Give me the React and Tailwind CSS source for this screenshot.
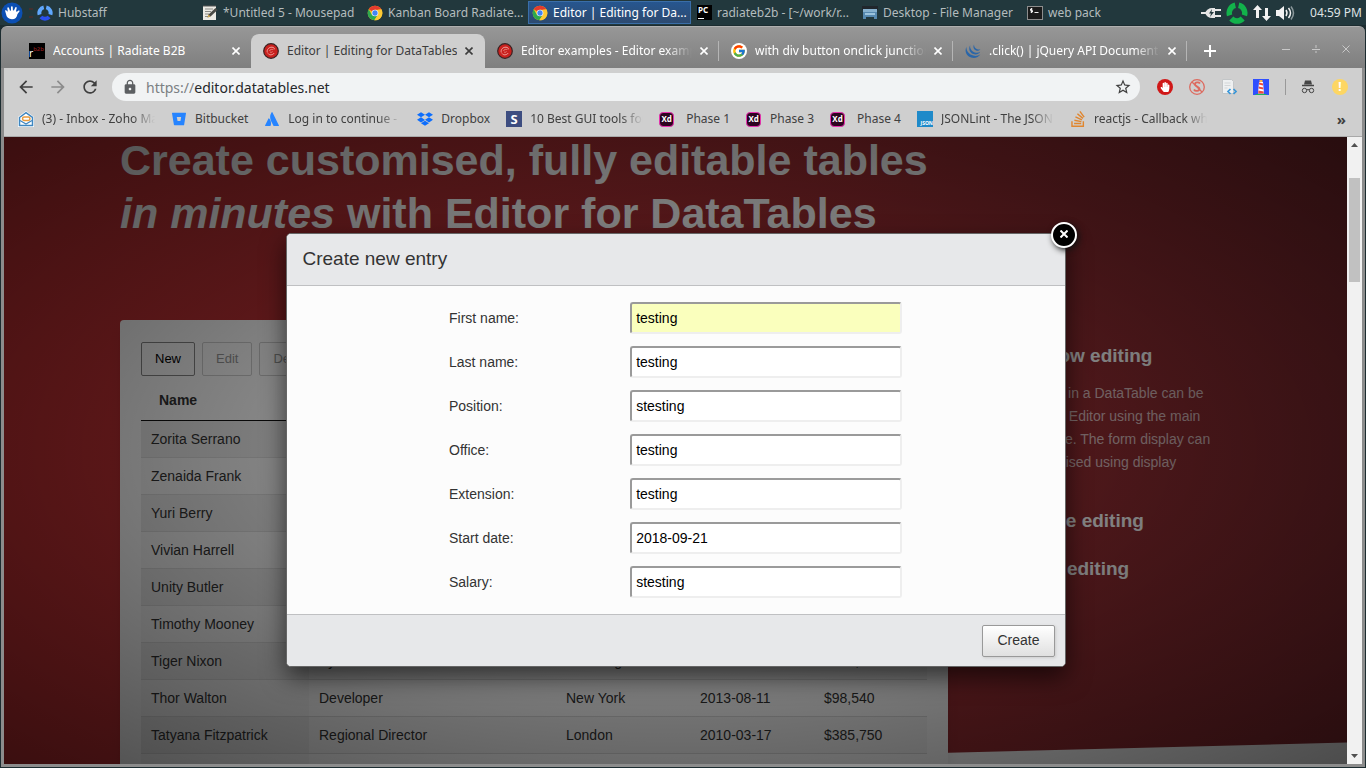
import React from 'react';
import { MdArrowBack, MdArrowForward, MdRefresh, MdLock, MdStarBorder } from 'react-icons/md';
import { FaDropbox, FaHandPaper } from 'react-icons/fa';
import { FcGoogle } from 'react-icons/fc';
import { SiAtlassian, SiBitbucket, SiStackoverflow } from 'react-icons/si';

/* ---------- Icons ---------- */

const ChromeIcon = () => (
  <svg viewBox="0 0 48 48" className="size-4 shrink-0">
    <circle cx="24" cy="24" r="22" fill="#fbc116" />
    <path d="M24 24 4.9 13A22 22 0 0 1 43.1 13L43 14H24z" fill="#e33b2e" />
    <path d="M4.9 13A22 22 0 0 0 22 45.900l11-17L24 24 14.500 29z" fill="#2da94f" />
    <path d="M43.100 13A22 22 0 0 1 22 45.900L33.500 28 33 14z" fill="#fcc934" />
    <circle cx="24" cy="24" r="10" fill="#fff" />
    <circle cx="24" cy="24" r="8" fill="#4285f4" />
  </svg>
);

const XfceIcon = () => (
  <svg viewBox="0 0 22 22" className="size-[22px] shrink-0">
    <circle cx="11" cy="11" r="10.500" fill="#0b4fb3" />
    <path
      d="M4 8.500c.8-.6 1.500-.3 2 .4l.8.8L6.300 6c.3-.9 1.400-.8 1.700 0l1 2.800 1-.3V4.800c.3-.9 1.500-.9 1.700 0l.2 3.400 1 .2 1.400-3c.6-.8 1.500-.3 1.400.5L15 9.300l.9.5 1.600-1.300c.8-.4 1.400.4.9 1.100l-2 2.600c-.3 3-2.300 5-5.400 5-3.400 0-5.500-2-6-5.200z"
      fill="#fff"
    />
  </svg>
);

// three thick arcs, blue for the timer app and green in the tray
const RingIcon = ({ bottom, sides, className }) => (
  <svg viewBox="0 0 22 22" className={className} fill="none" strokeWidth="5.500">
    <path d="M3.600 13.300A7.800 7.800 0 0 1 9.300 3.300" stroke={sides} />
    <path d="M12.700 3.300a7.800 7.800 0 0 1 5.700 10" stroke={sides} />
    <path d="M5.300 16.500a7.800 7.800 0 0 0 11.400 0" stroke={bottom} />
  </svg>
);

const NotepadIcon = () => (
  <svg viewBox="0 0 16 16" className="size-4 shrink-0">
    <path d="M1 1h13v14H1z" fill="#eceae4" />
    <path d="M3 4h8M3 6.500h6M3 9h4M3 11.500h5" stroke="#8a8a86" />
    <path d="m5.500 12.500 1-3L13.500 3l2 2-7 6.500z" fill="#4a4a45" />
    <path d="m5.500 12.500 1-3 2 2z" fill="#d7ae52" />
    <path d="M1 1h13" stroke="#555" />
  </svg>
);

const PyCharmIcon = () => (
  <span className="flex size-[15px] shrink-0 flex-col items-start justify-between bg-black p-px">
    <span className="text-[8px] leading-[8px] font-bold text-white">PC</span>
    <span className="h-px w-1.5 bg-white" />
  </span>
);

const FilesIcon = () => (
  <svg viewBox="0 0 16 16" className="size-4 shrink-0">
    <path d="M0 1h16v4H0z" fill="#20262c" />
    <path d="M1 4h14v3H1z" fill="#86b1cf" />
    <path d="M1 7h14v7h-3v-2H4v2H1z" fill="#5689b0" />
    <path d="M3 8h10v2H3z" fill="#9bc3dd" />
  </svg>
);

const TerminalIcon = () => (
  <svg viewBox="0 0 16 16" className="size-4 shrink-0">
    <rect x=".5" y="1.500" width="15" height="13" fill="#1b1b1b" stroke="#8d8d8d" />
    <path d="M5.500 4H3.500v1.500h2V7h-2M4.500 3v5M7.500 7.500h4" stroke="#eee" fill="none" />
  </svg>
);

const PlugIcon = () => (
  <svg viewBox="0 0 20 14" className="h-3.5 w-5 shrink-0" fill="#e6e6e6">
    <path d="M0 6h5v2H0z" />
    <path d="M4 7c1-3 4-5 7-5h3v10h-3c-3 0-6-2-7-5z" />
    <path d="M14 3h6v2h-6zM14 9h6v2h-6z" />
    <path d="m11 3-3 4.500h2L9 11l4-5h-2.500z" fill="#22383d" />
  </svg>
);

const TransferIcon = () => (
  <svg viewBox="0 0 18 16" className="h-4 w-[18px] shrink-0" fill="#f2f2f2">
    <path d="M4.500 0 9 5H6v8H3V5H0z" />
    <path d="M13.500 16 9 11h3V3h3v8h3z" />
  </svg>
);

const VolumeIcon = () => (
  <svg viewBox="0 0 19 16" className="h-4 w-[19px] shrink-0" fill="none" strokeWidth="1.500">
    <path d="M0 5h3l5-4v14l-5-4H0z" fill="#f2f2f2" />
    <path d="M10 5q2 3 0 6M12.500 3q4 5 0 10" stroke="#f2f2f2" />
    <path d="M15 1.500q5 6.500 0 13" stroke="#8b989b" />
  </svg>
);

const RadiateIcon = () => (
  <span className="flex size-4 shrink-0 items-end bg-black text-[10px] leading-[12px] text-white">
    r<span className="self-start text-[6px] leading-[12px] text-[#a02020]">b2b</span>
  </span>
);

const DataTablesIcon = () => (
  <svg viewBox="0 0 16 16" className="size-4 shrink-0" fill="none">
    <circle cx="8" cy="8" r="7.300" fill="#c9211e" stroke="#3a2222" strokeWidth="1.200" />
    <path d="M4.300 9.500C3.500 6.500 6 4 9 4.200c2 .1 2.800 1.300 2 2.300M5 10.500c1.500 2 4.500 1.700 6.300-.5" stroke="#f0a39d" />
    <path d="M6.500 8c.5-1.500 2-2 3.300-1.500M7 9c1 .6 2 .3 2.600-.5" stroke="#e8827c" />
  </svg>
);

const GoogleIcon = () => (
  <span className="flex size-4 shrink-0 items-center justify-center rounded-full bg-white">
    <FcGoogle className="size-3.5" />
  </span>
);

const JQueryIcon = () => (
  <svg viewBox="0 0 16 16" className="size-4 shrink-0" fill="#2a66a9">
    <path d="M1.600 3.500C-1 8 1.500 13.800 7 14.800c3.500.6 7-.8 8.300-3.500-2 1.500-4.500 2-7 1.300C3.800 11.500.8 7.500 1.600 3.500z" />
    <path d="M5.200 2.200C3.200 5.500 4.500 9.700 8.300 11c2.700.9 5.500.2 6.900-2.200-1.700 1-3.600 1.200-5.400.6C6.500 8.300 4.600 5.300 5.200 2.200z" />
    <path d="M9 1.500c-1.300 2.300-.5 5 2 6 1.700.6 3.400.2 4.400-1.200-1 .4-2.100.4-3.100 0C10.200 5.500 8.900 3.700 9 1.500z" />
  </svg>
);

const CrossIcon = ({ className }) => (
  <svg viewBox="0 0 8 8" className={className} stroke="currentColor" strokeWidth="1.600">
    <path d="M.5.5l7 7M7.500.5l-7 7" />
  </svg>
);

const ZohoIcon = () => (
  <svg viewBox="0 0 16 16" className="size-4 shrink-0" fill="none">
    <path d="M0 6 8 0l8 6v10H0z" fill="#fff" />
    <path d="M1.500 6.500 8 1.700l6.500 4.800v8h-13z" stroke="#3f86c0" strokeWidth="1.500" />
    <rect x="4.500" y="6" width="7.500" height="3.500" rx="1.700" stroke="#e99a3c" strokeWidth="1.500" />
    <path d="m2 9.500 6 3.500 6-3.500" stroke="#3f86c0" strokeWidth="1.300" />
  </svg>
);

const XdIcon = () => (
  <span className="flex size-4 shrink-0 items-center">
    <span className="flex size-[15px] items-center justify-center rounded-sm border border-[#e62fae] bg-[#2d0420] text-[8px] leading-none font-bold text-white">
      Xd
    </span>
  </span>
);

const SIcon = () => (
  <span className="flex size-4 shrink-0 items-center justify-center bg-[#3d4d80] text-[13px] leading-none font-bold text-white">
    S
  </span>
);

const JsonIcon = () => (
  <span className="flex size-4 shrink-0 items-end justify-end bg-[#1f8ac9] text-[5px] leading-[7px] font-bold text-white">
    JSON
  </span>
);

const StopScriptIcon = () => (
  <svg viewBox="0 0 16 16" className="size-4" fill="none" stroke="#dd6a5f">
    <circle cx="8" cy="8" r="7.300" strokeWidth="1.300" />
    <path d="m3 3 10 10" strokeWidth="1.300" />
    <path d="M11 4.500c-1-1.500-5-1.500-5 .7 0 2.500 4.500 2 4.500 4.600 0 2.500-4.500 2.700-5.500.7" strokeWidth="1.800" />
  </svg>
);

const PageCodeIcon = () => (
  <svg viewBox="0 0 16 16" className="size-4" fill="none">
    <path d="M1.500.5h9l2 2v12h-11z" fill="#eef0f1" stroke="#c3c6c8" />
    <path d="M3.500 4h6M3.500 6.500h6M3.500 9h3" stroke="#d3d6d8" />
    <path d="m9.500 10-2.500 2.500L9.500 15M12.500 10l2.500 2.500-2.500 2.500" stroke="#3a97d8" strokeWidth="1.700" />
  </svg>
);

const LighthouseIcon = () => (
  <svg viewBox="0 0 16 16" className="size-4">
    <path d="M0 0h16v16H0z" fill="#304ffe" />
    <path d="M2 16c1-2 11-2 12 0z" fill="#1fb55a" />
    <path d="M6 3h4l1 11.500H5z" fill="#fff" />
    <path d="m6 3.500 4 1v2l-4-1zM5.700 7.500l4.600 1v2l-4.600-1zM5.400 11.500l5.300 1v2H5.200z" fill="#ef4b3c" />
    <path d="M6.500 1h3v2h-3z" fill="#ffb74a" />
  </svg>
);

const IncognitoIcon = () => (
  <svg viewBox="0 0 16 16" className="size-4" fill="none" stroke="#454545">
    <path d="M5 1.500h6l1 4H4z" fill="#454545" stroke="none" />
    <path d="M2 6.500h12" strokeWidth="1.500" />
    <circle cx="4.500" cy="11.500" r="2.200" />
    <circle cx="11.500" cy="11.500" r="2.200" />
    <path d="M6.500 11q1.500-1 3 0" />
  </svg>
);

/* ---------- Data ---------- */

const tasks = [
  { label: 'Hubstaff', icon: <RingIcon bottom="#2a4ff0" sides="#5fa8ff" className="size-4 shrink-0" /> },
  { label: '*Untitled 5 - Mousepad', icon: <NotepadIcon /> },
  { label: 'Kanban Board Radiate...', icon: <ChromeIcon /> },
  { label: 'Editor | Editing for Da...', icon: <ChromeIcon />, active: true },
  { label: 'radiateb2b - [~/work/r...', icon: <PyCharmIcon /> },
  { label: 'Desktop - File Manager', icon: <FilesIcon /> },
  { label: 'web pack', icon: <TerminalIcon /> },
];

const tabs = [
  { label: 'Accounts | Radiate B2B', icon: <RadiateIcon /> },
  { label: 'Editor | Editing for DataTables', icon: <DataTablesIcon />, active: true },
  { label: 'Editor examples - Editor examples', icon: <DataTablesIcon />, fade: true, divider: true },
  { label: 'with div button onclick junction on', icon: <GoogleIcon />, fade: true, divider: true },
  { label: '.click() | jQuery API Documentation', icon: <JQueryIcon />, fade: true, divider: true },
];

const bookmarks = [
  { label: '(3) - Inbox - Zoho Mail', icon: <ZohoIcon />, fade: true },
  { label: 'Bitbucket', icon: <SiBitbucket className="mx-px size-3.5 shrink-0 text-[#2684ff]" /> },
  { label: 'Log in to continue - Log in', icon: <SiAtlassian className="mx-px size-3.5 shrink-0 text-[#2684ff]" />, fade: true },
  { label: 'Dropbox', icon: <FaDropbox className="size-4 shrink-0 text-[#0d6efd]" /> },
  { label: '10 Best GUI tools for Mongo', icon: <SIcon />, fade: true },
  { label: 'Phase 1', icon: <XdIcon />, indent: true },
  { label: 'Phase 3', icon: <XdIcon /> },
  { label: 'Phase 4', icon: <XdIcon />, indent: true },
  { label: 'JSONLint - The JSON Validator', icon: <JsonIcon />, fade: true },
  { label: 'reactjs - Callback when', icon: <SiStackoverflow className="size-4 shrink-0 text-[#e0862f]" />, fade: true },
];

const rows = [
  ['Zorita Serrano', 'Software Engineer', 'San Francisco', '2012-06-01', '$115,000'],
  ['Zenaida Frank', 'Software Engineer', 'New York', '2010-01-04', '$125,250'],
  ['Yuri Berry', 'Chief Marketing Officer', 'New York', '2009-06-25', '$675,000'],
  ['Vivian Harrell', 'Financial Controller', 'San Francisco', '2009-02-14', '$452,500'],
  ['Unity Butler', 'Marketing Designer', 'San Francisco', '2009-12-09', '$85,675'],
  ['Timothy Mooney', 'Office Manager', 'London', '2008-12-11', '$136,200'],
  ['Tiger Nixon', 'System Architect', 'Edinburgh', '2011-04-25', '$320,800'],
  ['Thor Walton', 'Developer', 'New York', '2013-08-11', '$98,540'],
  ['Tatyana Fitzpatrick', 'Regional Director', 'London', '2010-03-17', '$385,750'],
  ['Suki Burks', 'Developer', 'London', '2009-10-22', '$114,500'],
];

const fields = [
  { id: 'first-name', label: 'First name:', value: 'testing', filled: true },
  { id: 'last-name', label: 'Last name:', value: 'testing' },
  { id: 'position', label: 'Position:', value: 'stesting' },
  { id: 'office', label: 'Office:', value: 'testing' },
  { id: 'extension', label: 'Extension:', value: 'testing' },
  { id: 'start-date', label: 'Start date:', value: '2018-09-21' },
  { id: 'salary', label: 'Salary:', value: 'stesting' },
];

/* ---------- Desktop panel ---------- */

const Taskbar = () => (
  <header className="flex h-[25px] shrink-0 items-center overflow-hidden bg-[#22383d] pr-1 text-[12px] text-[#b4bcbe]">
    <div className="flex w-[33px] shrink-0 items-center gap-1.5 pl-px">
      <XfceIcon />
      <span className="h-2.5 w-1 border-y-2 border-[#43302f]" />
    </div>
    <nav className="flex min-w-0 flex-1 gap-0.5">
      {tasks.map((task) => (
        <button
          key={task.label}
          type="button"
          className={
            task.active
              ? 'flex h-[23px] w-[163px] items-center gap-[5px] border border-[#3a6ea8] bg-linear-to-b from-[#26568f] to-[#2d4a70] pl-[3px] whitespace-nowrap text-white'
              : 'flex h-[23px] w-[163px] items-center gap-[5px] pl-1 whitespace-nowrap'
          }
        >
          {task.icon}
          {task.label}
        </button>
      ))}
    </nav>
    <div className="flex shrink-0 items-center gap-[5px] text-[#dfe3e4]">
      <PlugIcon />
      <RingIcon bottom="#12b24b" sides="#12b24b" className="size-[22px]" />
      <TransferIcon />
      <VolumeIcon />
      <span className="pl-2.5">04:59 PM</span>
    </div>
  </header>
);

/* ---------- Browser chrome ---------- */

const TabStrip = () => (
  <div className="flex h-[42px] shrink-0 items-end rounded-t-md border-t border-[#b0b0b0] bg-linear-to-b from-[#979797] to-[#7f7f7f] pl-4 text-[12px] text-white">
    {tabs.map((tab) => (
      <div
        key={tab.label}
        className={
          tab.active
            ? 'flex h-[34px] w-[234px] items-center rounded-t-lg bg-[#cfcfcf] px-3 text-[#3c3c3c]'
            : 'flex h-[34px] w-[234px] items-center pl-3'
        }
      >
        {tab.icon}
        <a
          href="#tab"
          className={
            tab.fade
              ? 'ml-2 min-w-0 flex-1 overflow-hidden whitespace-nowrap [mask-image:linear-gradient(to_right,black_85%,transparent)]'
              : 'ml-2 min-w-0 flex-1 overflow-hidden whitespace-nowrap'
          }
        >
          {tab.label}
        </a>
        <button type="button" aria-label="Close tab" className={tab.active ? 'ml-2' : tab.divider ? 'mr-2.5 ml-2' : 'mr-[11px] ml-2'}>
          <CrossIcon className="size-2" />
        </button>
        {tab.divider && <span className="h-5 w-px bg-[#b5b5b5]" />}
      </div>
    ))}
    <button type="button" aria-label="New tab" className="mb-[11px] ml-[17px]">
      <svg viewBox="0 0 12 12" className="size-3" stroke="currentColor" strokeWidth="2">
        <path d="M6 0v12M0 6h12" />
      </svg>
    </button>
    <div className="mr-[15px] mb-[15px] ml-auto flex gap-[22px] text-[#c8c8c8]">
      <button type="button" aria-label="Minimise">
        <svg viewBox="0 0 8 8" className="size-2" stroke="currentColor">
          <path d="M0 4.500h8" />
        </svg>
      </button>
      <button type="button" aria-label="Maximise">
        <svg viewBox="0 0 8 8" className="size-2" stroke="currentColor">
          <path d="M0 4.500h8M4 0v3M4 6v2" />
        </svg>
      </button>
      <button type="button" aria-label="Close">
        <svg viewBox="0 0 8 8" className="size-2" stroke="currentColor">
          <path d="M.5.5l7 7M7.500.5l-7 7" />
        </svg>
      </button>
    </div>
  </div>
);

const Toolbar = () => (
  <div className="flex h-[38px] shrink-0 items-center bg-[#cfcfcf] pr-3.5 pl-3 text-[#3f3f3f]">
    <button type="button" aria-label="Back">
      <MdArrowBack className="size-5" />
    </button>
    <button type="button" aria-label="Forward" className="ml-3 text-[#8c8c8c]">
      <MdArrowForward className="size-5" />
    </button>
    <button type="button" aria-label="Reload" className="ml-3">
      <MdRefresh className="size-5" />
    </button>
    <div className="ml-3 flex h-7 flex-1 items-center rounded-full bg-[#f1f3f4] pr-2 pl-2.5">
      <MdLock className="size-4 text-[#5c5f62]" />
      <div className="ml-2 flex-1 text-[14px] text-[#26282b]">
        <span className="text-[#7b7f83]">https://</span>editor.datatables.net
      </div>
      <button type="button" aria-label="Bookmark this page">
        <MdStarBorder className="size-[18px]" />
      </button>
    </div>
    <div className="ml-[17px] flex items-center gap-4">
      <span className="flex size-4 items-center justify-center rounded-full bg-[#d01818]">
        <FaHandPaper className="size-2.5 text-white" />
      </span>
      <StopScriptIcon />
      <PageCodeIcon />
      <LighthouseIcon />
      <span className="-mr-0.5 h-4 w-px bg-[#999]" />
      <IncognitoIcon />
      <span className="flex size-4 items-center justify-center rounded-full bg-[#fdd663] text-[12px] leading-none font-bold text-white">
        !
      </span>
    </div>
  </div>
);

const BookmarksBar = () => (
  <nav className="flex h-[31px] shrink-0 items-center border-b border-[#a9a9a9] bg-[#cfcfcf] pr-4 pb-1 pl-3.5 text-[12px] text-[#404040]">
    {bookmarks.map((item) => (
      <a key={item.label} href="#bookmark" className="mr-4 flex shrink-0 items-center gap-2 whitespace-nowrap">
        {item.icon}
        <span
          className={
            item.fade
              ? 'w-[113px] overflow-hidden [mask-image:linear-gradient(to_right,black_80%,transparent)]'
              : item.indent
                ? 'pl-[3px]'
                : ''
          }
        >
          {item.label}
        </span>
      </a>
    ))}
    <button type="button" className="ml-auto text-[15px] leading-none font-bold">
      »
    </button>
  </nav>
);

const Scrollbar = () => (
  <div className="flex w-[15px] shrink-0 flex-col items-center bg-[#f1f1f1] py-1.5">
    <svg viewBox="0 0 7 4" className="h-1 w-[7px]" fill="#505050">
      <path d="M0 4 3.500 0 7 4z" />
    </svg>
    <div className="mt-[31px] h-[104px] w-[11px] bg-[#c1c1c1]" />
    <svg viewBox="0 0 7 4" className="mt-auto h-1 w-[7px]" fill="#505050">
      <path d="M0 0h7L3.500 4z" />
    </svg>
  </div>
);

/* ---------- Page ---------- */

const StaffTable = () => (
  <table className="w-full table-fixed border-separate border-spacing-0 text-left text-[14px] text-[#333]">
    <colgroup>
      <col className="w-[168px]" />
      <col className="w-[247px]" />
      <col className="w-[134px]" />
      <col className="w-[124px]" />
      <col />
    </colgroup>
    <thead>
      <tr>
        {['Name', 'Position', 'Office', 'Start date', 'Salary'].map((name) => (
          <th key={name} className="h-[41px] border-b border-[#111] px-[18px] font-bold">
            {name}
          </th>
        ))}
      </tr>
    </thead>
    <tbody>
      {rows.map((row) => (
        <tr key={row[0]} className="group odd:bg-[#f7f7f7]">
          {row.map((cell, i) => (
            <td
              key={cell}
              className={
                i === 0
                  ? 'h-[37px] border-t border-[#ddd] px-2.5 group-first:h-9 group-first:border-t-0 group-odd:bg-[#ececec] group-even:bg-[#f8f8f8]'
                  : 'h-[37px] border-t border-[#ddd] px-2.5 group-first:h-9 group-first:border-t-0'
              }
            >
              {cell}
            </td>
          ))}
        </tr>
      ))}
    </tbody>
  </table>
);

const Page = () => (
  <main className="relative h-full overflow-hidden bg-linear-to-r from-[#c53033] to-[#862b31]">
    <div className="absolute inset-x-0 bottom-0 h-8 bg-white [clip-path:polygon(0_140%,100%_33%,100%_100%,0_100%)]" />
    <div className="relative mx-auto max-w-[1111px]">
      <h1 className="-mt-[3px] text-[43px] leading-[53px] font-bold text-white">
        Create customised, fully editable tables
        <br />
        <em>in minutes</em> with Editor for DataTables
      </h1>
      <div className="mt-20 flex items-start">
        <section className="w-[828px] shrink-0 rounded-t bg-white px-[21px] pt-[22px] shadow-lg">
          <div className="flex gap-[7px] text-[13px]">
            <button type="button" className="h-[34px] rounded-xs border border-[#888] px-[13px] text-black">
              New
            </button>
            <button type="button" disabled className="h-[34px] rounded-xs border border-[#d0d0d0] px-[13px] text-[#999]">
              Edit
            </button>
            <button type="button" disabled className="h-[34px] rounded-xs border border-[#d0d0d0] px-[13px] text-[#999]">
              Delete
            </button>
          </div>
          <div className="mt-1">
            <StaffTable />
          </div>
        </section>
        <aside className="ml-16 flex-1 pt-6 text-[14px] leading-[23px] text-white/70">
          <h2 className="mb-3.5 text-[19px] leading-6 font-bold text-white">Full row editing</h2>
          <p className="mb-3">
            Records in a DataTable can be
            <br />
            edited in Editor using the main
            <br />
            web page. The form display can
            <br />
            be optimised using display
            <br />
            modes.
          </p>
          <h2 className="mb-6 text-[19px] leading-6 font-bold text-white">Bubble editing</h2>
          <h2 className="text-[19px] leading-6 font-bold text-white">Inline editing</h2>
        </aside>
      </div>
    </div>
  </main>
);

const CreateDialog = () => (
  <div
    role="dialog"
    aria-label="Create new entry"
    className="relative w-[780px] max-w-full rounded-[5px] border border-[#666] bg-[#fcfcfc] text-[14px] text-[#333] shadow-[0_10px_24px_rgba(0,0,0,0.6)]"
  >
    <h2 className="flex h-[52px] items-center rounded-t border-b border-[#bfc0c2] bg-[#e7e8ea] px-4 text-[19px]">
      Create new entry
    </h2>
    <form>
      <div className="mx-auto flex max-w-[453px] flex-col gap-3 py-4">
        {fields.map((field) => (
          <div key={field.id} className="flex items-center">
            <label htmlFor={field.id} className="w-2/5">
              {field.label}
            </label>
            <input
              id={field.id}
              type="text"
              defaultValue={field.value}
              className={
                field.filled
                  ? 'h-8 w-3/5 rounded-[3px] border-2 border-t-[#9a9a9a] border-r-[#eee] border-b-[#eee] border-l-[#9a9a9a] bg-[#faffbd] px-1 text-black'
                  : 'h-8 w-3/5 rounded-[3px] border-2 border-t-[#9a9a9a] border-r-[#eee] border-b-[#eee] border-l-[#9a9a9a] bg-white px-1 text-black'
              }
            />
          </div>
        ))}
      </div>
      <div className="flex h-[52px] items-center justify-end rounded-b border-t border-[#bfc0c2] bg-[#e7e8ea] px-2.5">
        <button
          type="button"
          className="h-8 rounded-xs border border-[#999] bg-linear-to-b from-white to-[#e0e0e0] px-3.5 shadow-[1px_1px_3px_#ccc]"
        >
          Create
        </button>
      </div>
    </form>
    <button
      type="button"
      aria-label="Close dialog"
      className="absolute -top-3 -right-3 flex size-[26px] items-center justify-center rounded-full border-2 border-white bg-black pb-0.5 text-white shadow-[2px_2px_6px_#111]"
    >
      <svg viewBox="0 0 8 8" className="size-2" stroke="currentColor" strokeWidth="2">
        <path d="M.5.5l7 7M7.500.5l-7 7" />
      </svg>
    </button>
  </div>
);

const App = () => {
  return (
    <div className="flex h-screen flex-col overflow-hidden bg-[#1c2c30] font-['Noto_Sans',sans-serif]">
      <Taskbar />
      <div className="flex min-h-0 flex-1 flex-col p-px">
        <TabStrip />
        <div className="flex min-h-0 flex-1 flex-col border-x-[3px] border-b-[3px] border-[#8c8c8c]">
          <Toolbar />
          <BookmarksBar />
          <div className="flex min-h-0 flex-1">
            <div className="relative min-w-0 flex-1 font-['Liberation_Sans',sans-serif]">
              <Page />
              <div className="absolute inset-0 flex items-start justify-center bg-[radial-gradient(ellipse_farthest-corner_at_center,rgba(0,0,0,0.3)_0%,rgba(0,0,0,0.7)_100%)] pt-24">
                <CreateDialog />
              </div>
            </div>
            <Scrollbar />
          </div>
        </div>
      </div>
    </div>
  );
};

export default App;
